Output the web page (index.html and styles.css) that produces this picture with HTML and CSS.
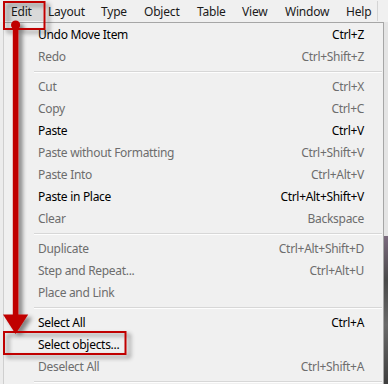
FILE: index.html
```html
<!DOCTYPE html>
<html>
<head>
<meta charset="utf-8">
<link rel="stylesheet" href="styles.css">
</head>
<body>
<div class="screen">
  <div class="menubar">
    <span class="mb mb-edit active">Edit</span>
    <span class="mb mb-layout">Layout</span>
    <span class="mb mb-type">Type</span>
    <span class="mb mb-object">Object</span>
    <span class="mb mb-table">Table</span>
    <span class="mb mb-view">View</span>
    <span class="mb mb-window">Window</span>
    <span class="mb mb-help">Help</span>
  </div>
  <div class="workspace">
    <div class="left-strip"></div>
    <div class="menu">
      <div class="item"><span>Undo Move Item</span><span>Ctrl+Z</span></div>
      <div class="item off"><span>Redo</span><span>Ctrl+Shift+Z</span></div>
      <div class="sep"></div>
      <div class="item off"><span>Cut</span><span>Ctrl+X</span></div>
      <div class="item off"><span>Copy</span><span>Ctrl+C</span></div>
      <div class="item"><span>Paste</span><span>Ctrl+V</span></div>
      <div class="item off"><span>Paste without Formatting</span><span>Ctrl+Shift+V</span></div>
      <div class="item off"><span>Paste Into</span><span>Ctrl+Alt+V</span></div>
      <div class="item"><span>Paste in Place</span><span>Ctrl+Alt+Shift+V</span></div>
      <div class="item off"><span>Clear</span><span>Backspace</span></div>
      <div class="sep"></div>
      <div class="item off"><span>Duplicate</span><span>Ctrl+Alt+Shift+D</span></div>
      <div class="item off"><span>Step and Repeat...</span><span>Ctrl+Alt+U</span></div>
      <div class="item off"><span>Place and Link</span><span></span></div>
      <div class="sep"></div>
      <div class="item"><span>Select All</span><span>Ctrl+A</span></div>
      <div class="item"><span>Select objects...</span><span></span></div>
      <div class="item off"><span>Deselect All</span><span>Ctrl+Shift+A</span></div>
      <div class="sep"></div>
    </div>
    <div class="right-strip"><div class="photo"></div></div>
  </div>
  <svg class="annot" width="388" height="384" viewBox="0 0 388 384">
    <defs>
      <filter id="sh" x="-50%" y="-50%" width="200%" height="200%">
        <feDropShadow dx="4" dy="3" stdDeviation="2" flood-color="#000" flood-opacity="0.45"/>
      </filter>
    </defs>
    <g filter="url(#sh)">
      <rect x="4" y="2" width="40.5" height="27" fill="none" stroke="#c00000" stroke-width="2"/>
      <rect x="4" y="332" width="121.5" height="22" fill="none" stroke="#c00000" stroke-width="2"/>
      <rect x="12.8" y="25" width="5.6" height="291" fill="#c00000"/>
      <circle cx="15.6" cy="25" r="4.6" fill="#c00000"/>
      <polygon points="3,314.5 28.2,314.5 15.6,334" fill="#c00000"/>
    </g>
  </svg>
</div>
</body>
</html>
```
FILE: styles.css
```css
html, body {
  margin: 0;
  padding: 0;
}
body {
  background: #f0f0f0;
  font-family: "Noto Sans", "Open Sans", sans-serif;
  font-size: 12px;
  color: #000;
}
.screen {
  position: relative;
  width: 388px;
  height: 384px;
  overflow: hidden;
  background: #f0f0f0;
}
.menubar {
  display: flex;
  height: 22px;
  padding-left: 4px;
  box-sizing: border-box;
  background: #f0f0f0;
  align-items: stretch;
}
.mb {
  display: flex;
  align-items: center;
  box-sizing: border-box;
  height: 20px;
  margin-top: 1px;
  padding-left: 8px;
  letter-spacing: -0.2px;
  color: #1a1a1a;
}
.mb-edit { width: 36px; }
.mb-layout { width: 53px; }
.mb-type { width: 43px; }
.mb-object { width: 53px; }
.mb-table { width: 45px; }
.mb-view { width: 43px; }
.mb-window { width: 61px; }
.mb-help { width: 40px; border-right: 1px solid #d4d4d4; }
.mb.active {
  background: #d9d9d9;
  width: 39px;
  padding-left: 7px;
  margin-right: -3px;
}
.workspace {
  display: flex;
  height: 362px;
}
.left-strip {
  width: 3px;
  background: #ececec;
}
.menu {
  width: 381px;
  box-sizing: border-box;
  border: 1px solid #a6a6a6;
  border-left-color: #cfcfcf;
  border-bottom: none;
  background: #f0f0f0;
  padding-top: 1px;
}
.item {
  display: flex;
  justify-content: space-between;
  height: 22px;
  line-height: 22px;
  padding-left: 34px;
  padding-right: 19px;
  letter-spacing: -0.3px;
  color: #000;
}
.item.off {
  color: #6d6d6d;
}
.sep {
  margin: 3px 1px 3px 30px;
  height: 0;
  border-top: 1px solid #d7d7d7;
  border-bottom: 1px solid #fdfdfd;
}
.right-strip {
  width: 4px;
  background: #e4e4e4;
  display: flex;
  flex-direction: column;
  justify-content: flex-end;
}
.photo {
  height: 148px;
  background: linear-gradient(180deg, #7b6b7e 0%, #4a4a4a 30%, #6a6a6a 60%, #3e3e3e 100%);
}
.annot {
  position: absolute;
  left: 0;
  top: 0;
  pointer-events: none;
}
```
